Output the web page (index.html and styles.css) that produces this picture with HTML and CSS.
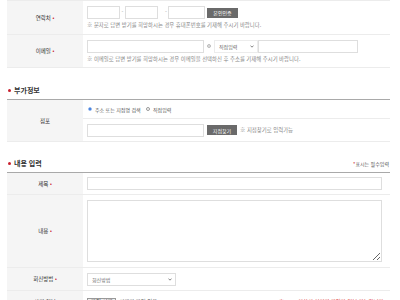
FILE: index.html
```html
<!DOCTYPE html>
<html lang="ko">
<head>
    <meta charset="UTF-8">
    <meta name="viewport" content="width=device-width, initial-scale=1.0">
    <title>문의하기</title>
    <link rel="stylesheet" href="styles.css">
</head>
<body>
<div class="wrap">

    <table class="form-table first">
        <tr class="row-phone">
            <th>연락처 <span class="req">•</span></th>
            <td>
                <div class="line">
                    <input type="text" class="in-phone">
                    <span class="dash">-</span>
                    <input type="text" class="in-phone">
                    <span class="dash dash-wide">-</span>
                    <input type="text" class="in-phone last">
                    <button class="btn-dark btn-auth">본인인증</button>
                </div>
                <p class="note">※ 문자로 답변 받기를 희망하시는 경우 휴대폰번호를 기재해 주시기 바랍니다.</p>
            </td>
        </tr>
        <tr class="row-mail">
            <th>이메일 <span class="req">•</span></th>
            <td>
                <div class="line">
                    <input type="text" class="in-mail">
                    <span class="at"></span>
                    <select class="sel-mail">
                        <option>직접입력</option>
                    </select>
                    <input type="text" class="in-domain">
                </div>
                <p class="note">※ 이메일로 답변 받기를 희망하시는 경우 이메일을 선택하신 후 주소를 기재해 주시기 바랍니다.</p>
            </td>
        </tr>
    </table>

    <h2 class="sec-title">부가정보</h2>
    <table class="form-table">
        <tr class="row-radio">
            <th rowspan="2">점포</th>
            <td>
                <label class="radio"><input type="radio" name="shop" checked> 주소 또는 지점명 검색</label>
                <label class="radio"><input type="radio" name="shop"> 직접입력</label>
            </td>
        </tr>
        <tr class="row-shop">
            <td>
                <div class="line">
                    <input type="text" class="in-shop">
                    <button class="btn-dark btn-find">지점찾기</button>
                    <span class="hint">※ 지점찾기로 입력가능</span>
                </div>
            </td>
        </tr>
    </table>

    <div class="sec-head">
        <h2 class="sec-title">내용 입력</h2>
        <span class="must"><span class="req">*</span>표시는 필수입력</span>
    </div>
    <table class="form-table">
        <tr class="row-subject">
            <th>제목 <span class="req">•</span></th>
            <td><input type="text" class="in-full"></td>
        </tr>
        <tr class="row-body">
            <th>내용 <span class="req">•</span></th>
            <td><textarea class="in-area"></textarea></td>
        </tr>
        <tr class="row-reply">
            <th>회신방법 <span class="req">•</span></th>
            <td>
                <select class="sel-reply">
                    <option>회신방법</option>
                </select>
            </td>
        </tr>
        <tr class="row-file">
            <th>사진 첨부</th>
            <td>
                <div class="line">
                    <span class="file-btn">파일 선택</span>
                    <span class="file-name">선택된 파일 없음</span>
                    <span class="file-warn">※ 5MB 이하의 이미지 파일만 첨부 가능합니다.</span>
                </div>
            </td>
        </tr>
    </table>

</div>
</body>
</html>
```

FILE: styles.css
```css
body {
  margin: 0;
  font-family: "Noto Sans CJK KR", "Noto Sans", sans-serif;
  color: #444;
  background: #fff;
}

.wrap {
  width: 383px;
  margin-left: 7px;
}

.form-table {
  width: 100%;
  border-collapse: collapse;
  border-top: 1px solid #a9a9a9;
}

.form-table.first {
  border-top: 1px solid #ececec;
}

.form-table th {
  width: 76px;
  padding: 0;
  background-color: #f5f5f5;
  font-size: 5.5px;
  font-weight: normal;
  color: #333;
  text-align: center;
  border-bottom: 1px solid #ececec;
}

.form-table td {
  padding: 0 0 0 4px;
  border-bottom: 1px solid #ececec;
  vertical-align: middle;
  font-size: 5px;
  line-height: 7px;
}

.req {
  color: #c8202e;
}

.line {
  display: flex;
  align-items: center;
  font-size: 5.4px;
}

input[type="text"],
select,
textarea {
  box-sizing: border-box;
  display: block;
  margin: 0;
  height: 13px;
  padding: 0 4px;
  border: 1px solid #dedede;
  background: #fff;
  font-family: inherit;
  font-size: 5px;
  color: #666;
  border-radius: 0;
}

.in-phone {
  width: 33px;
}

.in-phone.last {
  width: 37px;
}

.dash {
  width: 5px;
  text-align: center;
  color: #999;
}

.dash-wide {
  width: 9px;
  text-align: right;
  padding-right: 1px;
}

.btn-dark {
  border: none;
  padding: 0;
  height: 10px;
  background-color: #6a6a6a;
  color: #fff;
  font-family: inherit;
  font-size: 5px;
}

.btn-auth {
  width: 31px;
  margin-left: 2px;
}

.note {
  margin: 3px 0 0;
  font-size: 5.4px;
  line-height: 7px;
  color: #888;
}

.row-phone th,
.row-phone td {
  height: 33px;
}

.row-mail th,
.row-mail td {
  height: 32px;
}

.in-mail {
  width: 117px;
}

.at {
  box-sizing: border-box;
  width: 4px;
  height: 4px;
  margin: 0 3px 0 3px;
  border: 1px solid #bbb;
  border-radius: 50%;
  background: radial-gradient(circle, #bbb 0 0.6px, transparent 0.8px);
}

select {
  appearance: none;
  background-image: url("data:image/svg+xml,%3Csvg xmlns='http://www.w3.org/2000/svg' width='4' height='3' viewBox='0 0 4 3'%3E%3Cpath d='M0.5 0.6 L2 2.2 L3.5 0.6' fill='none' stroke='%23666' stroke-width='0.8'/%3E%3C/svg%3E");
  background-size: 4px 3px;
  background-position: right 3px center;
  background-repeat: no-repeat;
}

.sel-mail {
  width: 44px;
  border-color: #ececec;
}

.in-domain {
  width: 100px;
  margin-left: 3px;
}

.sec-title {
  margin: 0;
  font-size: 7px;
  font-weight: bold;
  color: #333;
  line-height: 10px;
}

.sec-title::before {
  content: "";
  display: inline-block;
  width: 3px;
  height: 3px;
  margin: 0 3px 1px 1px;
  border-radius: 50%;
  background-color: #c8202e;
  vertical-align: middle;
}

.wrap > .sec-title {
  margin: 17px 0 4px;
}

.row-radio td {
  height: 18px;
  color: #555;
}

.radio {
  display: inline-flex;
  align-items: center;
  margin-right: 3px;
}

.radio input {
  appearance: none;
  box-sizing: border-box;
  width: 4px;
  height: 4px;
  margin: 0 3px 0 1px;
  border: 1px solid #999;
  border-radius: 50%;
  background: #fff;
}

.radio input:checked {
  border-color: #9dbdf0;
  background: #2b6fd6;
}

.row-shop td {
  height: 22px;
}

.in-shop {
  width: 117px;
}

.btn-find {
  width: 30px;
  height: 10px;
  margin-left: 3px;
}

.hint {
  margin-left: 3px;
  color: #888;
}

.sec-head {
  display: flex;
  justify-content: space-between;
  align-items: flex-end;
  margin: 16px 0 4px;
}

.must {
  font-size: 5px;
  line-height: 8px;
  color: #555;
  margin-right: 1px;
}

.row-subject th,
.row-subject td {
  height: 21px;
}

.in-full {
  width: 295px;
}

.row-body th,
.row-body td {
  height: 72px;
}

.in-area {
  width: 295px;
  height: 62px;
  resize: vertical;
}

.row-reply th,
.row-reply td {
  height: 22px;
}

.sel-reply {
  width: 89px;
}

.row-file th,
.row-file td {
  height: 22px;
}

.file-btn {
  padding: 0 3px;
  border: 1px solid #999;
  background: #efefef;
  color: #333;
}

.file-name {
  margin-left: 3px;
  color: #555;
}

.file-warn {
  margin-left: auto;
  margin-right: 5px;
  color: #d33;
}
```
